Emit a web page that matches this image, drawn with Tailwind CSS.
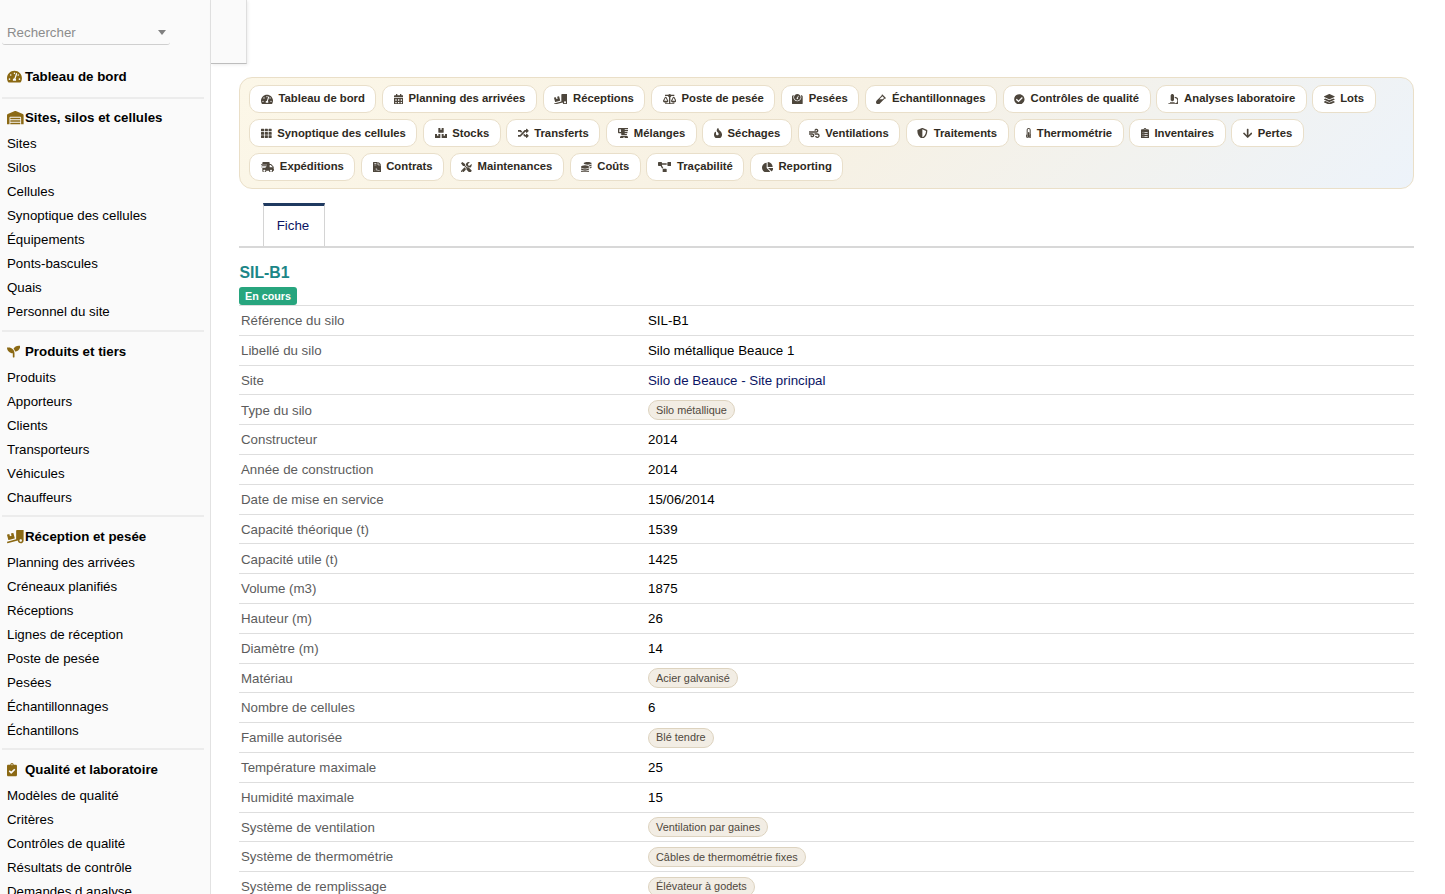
<!DOCTYPE html>
<html lang="fr">
<head>
<meta charset="utf-8">
<title>SIL-B1</title>
<script src="https://cdn.jsdelivr.net/npm/@tailwindcss/browser@4"></script>
</head>
<body class="h-[894px] w-[1445px] overflow-hidden bg-white font-['Liberation_Sans',Arial,sans-serif] text-[13.3px] text-black">
<div class="flex h-[894px] overflow-hidden">
  <aside class="h-[894px] w-[211px] shrink-0 overflow-hidden border-r border-[#e2e2e2] bg-[#fafafa] pl-[2px] pr-[6px]">
    <div class="mt-[20px] flex h-[25px] w-[168px] items-center justify-between rounded-b-[3px] border-b border-[#cfcfcf] pr-[4px] pl-[5px] text-[#8c8c8c]">
      <span class="pt-[2px]">Rechercher</span>
      <span class="mt-px h-0 w-0 border-x-[4px] border-t-[5px] border-x-transparent border-t-[#808080]"></span>
    </div>
    <div class="mt-[18px] flex h-[28px] items-center pl-[5px] font-bold"><span class="flex w-[18px]" data-icon="gauge"></span>Tableau de bord</div>
    <nav id="menu" class="mt-[6px]"></nav>
  </aside>
  <main class="min-w-0 flex-1">
    <div class="h-[64px] w-[36px] border-r border-b border-r-[#dedede] border-b-[#bdbdbd] bg-[#fafafa] shadow-[1px_1px_3px_rgba(0,0,0,0.08)]"></div>
    <div class="ml-[28px] w-[1175px]">
      <div id="pills" class="mt-[13px] flex h-[112px] flex-col gap-[6px] rounded-[13px] border border-[#eadfc8] bg-[linear-gradient(135deg,#fcf7e8_0%,#f7f1e3_50%,#edf3fa_100%)] pt-[7px] pl-[9.4px]"></div>
      <div class="mt-[14px] flex h-[45px] border-b-2 border-[#d8d8d8] pl-[24px]">
        <div class="flex h-[43px] w-[62px] items-center justify-center border-x border-t-[3px] border-x-[#d4d4d4] border-t-[#1f3a60] pr-[2px] text-[#0a1464]">Fiche</div>
      </div>
      <h1 class="mt-[15px] h-[20px] pl-[0.5px] text-[15.8px] leading-[20px] font-bold text-[#1b8687]">SIL-B1</h1>
      <div class="mt-[4px] flex h-[18px]"><span class="rounded-[3px] bg-[#27a57e] px-[6px] text-[10.75px] leading-[18px] font-bold text-white">En cours</span></div>
      <div id="rows"></div>
    </div>
  </main>
</div>
<script>
const sq = (x, y) => `M${x} ${y}c0-6.6 5.4-12 12-12h40c6.6 0 12 5.4 12 12v40c0 6.6-5.4 12-12 12h-40c-6.6 0-12-5.4-12-12z`;
const cell = (x, y) => `M${x} ${y + 24}a24 24 0 0 1 24-24h101a24 24 0 0 1 24 24v80a24 24 0 0 1-24 24h-101a24 24 0 0 1-24-24z`;
const dot = y => `M96 ${y}c-13.3 0-24-10.7-24-24s10.7-24 24-24 24 10.7 24 24-10.7 24-24 24z`;
const bar = y => `M320 ${y}c0 4.4-3.6 8-8 8H168c-4.4 0-8-3.6-8-8v-16c0-4.4 3.6-8 8-8h144c4.4 0 8 3.6 8 8z`;
const clip = 'M336 64h-80c0-35.3-28.7-64-64-64s-64 28.7-64 64H48C21.5 64 0 85.5 0 112v352c0 26.5 21.5 48 48 48h288c26.5 0 48-21.5 48-48V112c0-26.5-21.5-48-48-48zM192 40c13.3 0 24 10.7 24 24s-10.7 24-24 24-24-10.7-24-24 10.7-24 24-24z';
const icons = {
gauge:[576,'M288 32C128.94 32 0 160.94 0 320c0 52.8 14.25 102.26 39.06 144.8 5.61 9.62 16.3 15.2 27.44 15.2h443c11.14 0 21.83-5.58 27.44-15.2C561.75 422.26 576 372.8 576 320c0-159.06-128.94-288-288-288zm0 64c14.71 0 26.58 10.13 30.32 23.65-1.11 2.26-2.64 4.23-3.45 6.67l-9.22 27.67c-5.13 3.49-10.97 6.01-17.64 6.01-17.67 0-32-14.33-32-32S270.33 96 288 96zM96 384c-17.67 0-32-14.33-32-32s14.33-32 32-32 32 14.33 32 32-14.33 32-32 32zm48-160c-17.67 0-32-14.33-32-32s14.33-32 32-32 32 14.33 32 32-14.33 32-32 32zm246.77-72.41l-61.33 184C343.13 347.33 352 364.54 352 384c0 11.72-3.38 22.55-8.88 32H232.88c-5.5-9.45-8.88-20.28-8.88-32 0-33.94 26.5-61.43 59.9-63.59l61.34-184.01c4.17-12.56 17.73-19.45 30.36-15.17 12.57 4.19 19.35 17.79 15.17 30.36zm14.66 57.2l15.52-46.55c3.47-1.29 7.13-2.23 11.05-2.23 17.67 0 32 14.33 32 32s-14.33 32-32 32c-11.38-.01-20.89-6.28-26.57-15.22zM480 384c-17.67 0-32-14.33-32-32s14.33-32 32-32 32 14.33 32 32-14.33 32-32 32z'],
warehouse:[640,'M504 352H136.4c-4.4 0-8 3.6-8 8l-.1 48c0 4.4 3.6 8 8 8H504c4.4 0 8-3.6 8-8v-48c0-4.4-3.6-8-8-8zm0 96H136.1c-4.4 0-8 3.6-8 8l-.1 48c0 4.4 3.6 8 8 8h368c4.4 0 8-3.6 8-8v-48c0-4.4-3.6-8-8-8zm0-192H136.6c-4.4 0-8 3.6-8 8l-.1 48c0 4.4 3.6 8 8 8H504c4.4 0 8-3.6 8-8v-48c0-4.4-3.6-8-8-8zm106.5-139L338.4 3.7a48.15 48.15 0 0 0-36.9 0L29.5 117C11.7 124.5 0 141.9 0 161.3V504c0 4.4 3.6 8 8 8h80c4.4 0 8-3.6 8-8V256c0-17.6 14.6-32 32.6-32h382.8c18 0 32.6 14.4 32.6 32v248c0 4.4 3.6 8 8 8h80c4.4 0 8-3.6 8-8V161.3c0-19.4-11.7-36.8-29.5-44.3z'],
seedling:[512,'M64 96H0c0 123.7 100.3 224 224 224v144c0 8.8 7.2 16 16 16h32c8.8 0 16-7.2 16-16V320C288 196.3 187.7 96 64 96zm384-64c-84.2 0-157.4 46.5-195.7 115.2 27.7 30.2 48.2 66.9 59 107.6C424 243.1 512 147.9 512 32h-64z'],
loading:[640,'M50.2 375.6c2.3 8.5 11.1 13.6 19.6 11.3l216.4-58c8.5-2.3 13.6-11.1 11.3-19.6l-49.7-185.5c-2.3-8.5-11.1-13.6-19.6-11.3L151 133.3l24.8 92.7-61.8 16.5-24.8-92.7-77.3 20.7C3.4 172.8-1.7 181.6.6 190.1l49.6 185.5zM384 0c-17.7 0-32 14.3-32 32v323.6L5.9 450c-4.3 1.2-6.8 5.6-5.6 9.8l12.6 46.3c1.2 4.3 5.6 6.8 9.8 5.6l393.7-107.4C418.8 464.1 467.6 512 528 512c61.9 0 112-50.1 112-112V0H384zm144 448c-26.5 0-48-21.5-48-48s21.5-48 48-48 48 21.5 48 48-21.5 48-48 48z'],
clipcheck:[384,clip+'M313.2 271.8l-143 141.8c-4.7 4.7-12.3 4.6-17-.1l-82.6-83.3c-4.7-4.7-4.6-12.3.1-17L99.1 285c4.7-4.7 12.3-4.6 17 .1l46 46.4 106-105.2c4.7-4.7 12.3-4.6 17 .1l28.2 28.4c4.7 4.8 4.6 12.3-.1 17z'],
calendar:[448,'M0 464c0 26.5 21.5 48 48 48h352c26.5 0 48-21.5 48-48V192H0zM400 64h-48V16c0-8.8-7.2-16-16-16h-32c-8.8 0-16 7.2-16 16v48H160V16c0-8.8-7.2-16-16-16h-32c-8.8 0-16 7.2-16 16v48H48C21.5 64 0 85.5 0 112v48h448v-48c0-26.5-21.5-48-48-48z'+[64,192,320].map(x=>sq(x,268)+sq(x,396)).join('')],
scale:[640,'M256 336h-.02c0-16.18 1.34-8.73-85.05-181.51-17.65-35.29-68.19-35.36-85.87 0C-2.06 328.75.02 320.33.02 336H0c0 44.18 57.31 80 128 80s128-35.82 128-80zM128 176l72 144H56l72-144zm511.98 160c0-16.18 1.34-8.73-85.05-181.51-17.65-35.29-68.19-35.36-85.87 0-87.12 174.26-85.04 165.84-85.04 181.51H384c0 44.18 57.31 80 128 80s128-35.82 128-80h-.02zM440 320l72-144 72 144H440zm88 128H352V153.25c23.51-10.29 41.16-31.48 46.39-57.25H528c8.84 0 16-7.16 16-16V48c0-8.84-7.16-16-16-16H383.64C369.04 12.68 346.09 0 320 0s-49.04 12.68-63.64 32H112c-8.84 0-16 7.16-16 16v32c0 8.84 7.16 16 16 16h129.61c5.23 25.76 22.87 46.96 46.39 57.25V448H112c-8.84 0-16 7.16-16 16v32c0 8.84 7.16 16 16 16h416c8.84 0 16-7.16 16-16v-32c0-8.84-7.16-16-16-16z'],
weight:[512,'M448 64h-25.98C438.44 92.28 448 125.01 448 160c0 105.87-86.13 192-192 192S64 265.87 64 160c0-34.99 9.56-67.72 25.98-96H64C28.71 64 0 92.71 0 128v320c0 35.29 28.71 64 64 64h384c35.29 0 64-28.71 64-64V128c0-35.29-28.71-64-64-64zM256 320c88.37 0 160-71.63 160-160S344.37 0 256 0 96 71.63 96 160s71.63 160 160 160zm-.3-151.94l33.58-78.36c3.5-8.17 12.94-11.92 21.03-8.41 8.12 3.48 11.88 12.89 8.41 21l-33.67 78.55C291.73 188 296 197.45 296 208c0 22.09-17.91 40-40 40s-40-17.91-40-40c0-21.98 17.76-39.77 39.7-39.94z'],
vial:[480,'M477.7 186.1L309.5 18.3c-3.1-3.1-8.2-3.1-11.3 0l-34 33.9c-3.1 3.1-3.1 8.2 0 11.3l11.2 11.1L33 316.5c-38.8 38.7-45.1 102-9.4 143.5 20.6 24 49.5 36 78.4 35.9 26.4 0 52.8-10 72.9-30.1l246.3-245.7 11.2 11.1c3.1 3.1 8.2 3.1 11.3 0l34-33.9c3.1-3 3.1-8.1 0-11.2zM318 256H161l148-147.7 78.5 78.3L318 256z'],
check:[512,'M504 256c0 136.967-111.033 248-248 248S8 392.967 8 256 119.033 8 256 8s248 111.033 248 248zM227.314 387.314l184-184c6.248-6.248 6.248-16.379 0-22.627l-22.627-22.627c-6.248-6.249-16.379-6.249-22.628 0L216 308.118l-70.059-70.059c-6.248-6.248-16.379-6.248-22.628 0l-22.627 22.627c-6.248 6.248-6.248 16.379 0 22.627l104 104c6.249 6.249 16.379 6.249 22.628.001z'],
microscope:[512,'M160 320h12v16c0 8.84 7.16 16 16 16h40c8.84 0 16-7.16 16-16v-16h12c17.67 0 32-14.33 32-32V64c0-17.67-14.33-32-32-32V16c0-8.84-7.16-16-16-16h-64c-8.84 0-16 7.16-16 16v16c-17.67 0-32 14.33-32 32v224c0 17.67 14.33 32 32 32zm304 128h-1.29C493.24 413.99 512 369.2 512 320c0-105.88-86.12-192-192-192v64c70.58 0 128 57.42 128 128s-57.42 128-128 128H48c-26.51 0-48 21.49-48 48 0 8.84 7.16 16 16 16h480c8.84 0 16-7.16 16-16 0-26.51-21.49-48-48-48zm-360-32h208c4.42 0 8-3.58 8-8v-16c0-4.42-3.58-8-8-8H104c-4.42 0-8 3.58-8 8v16c0 4.42 3.58 8 8 8z'],
layers:[512,'M12.41 148.02l232.94 105.67c6.8 3.09 14.49 3.09 21.29 0l232.94-105.67c16.55-7.51 16.55-32.52 0-40.03L266.65 2.31a25.607 25.607 0 0 0-21.29 0L12.41 107.98c-16.55 7.51-16.55 32.53 0 40.04zm487.18 88.28l-58.09-26.33-161.64 73.27c-7.56 3.43-15.59 5.17-23.86 5.17s-16.29-1.74-23.86-5.17L70.51 209.97l-58.1 26.33c-16.55 7.5-16.55 32.5 0 40l232.94 105.59c6.8 3.08 14.49 3.08 21.29 0L499.59 276.3c16.55-7.5 16.55-32.5 0-40zm0 127.8l-57.87-26.23-161.86 73.37c-7.56 3.43-15.59 5.17-23.86 5.17s-16.29-1.74-23.86-5.17L70.29 337.87 12.41 364.1c-16.55 7.5-16.55 32.5 0 40l232.94 105.59c6.8 3.08 14.49 3.08 21.29 0L499.59 404.1c16.55-7.5 16.55-32.5 0-40z'],
grid:[512,[0,181.5,363].map(x=>cell(x,32)+cell(x,192)+cell(x,352)).join('')],
boxes:[576,'M560 288h-80v96l-32-21.3-32 21.3v-96h-80c-8.8 0-16 7.2-16 16v192c0 8.8 7.2 16 16 16h224c8.8 0 16-7.2 16-16V304c0-8.8-7.2-16-16-16zm-384-64h224c8.8 0 16-7.2 16-16V16c0-8.8-7.2-16-16-16h-80v96l-32-21.3L256 96V0h-80c-8.8 0-16 7.2-16 16v192c0 8.8 7.2 16 16 16zm64 64h-80v96l-32-21.3L96 384v-96H16c-8.8 0-16 7.2-16 16v192c0 8.8 7.2 16 16 16h224c8.8 0 16-7.2 16-16V304c0-8.8-7.2-16-16-16z'],
random:[512,'M504.971 359.029c9.373 9.373 9.373 24.569 0 33.941l-80 79.984c-15.01 15.01-40.971 4.49-40.971-16.971V416h-58.785a12.004 12.004 0 0 1-8.773-3.812l-70.556-75.596 53.333-57.143L352 336h32v-39.981c0-21.438 25.943-31.998 40.971-16.971l80 79.981zM12 176h84l52.781 56.551 53.333-57.143-70.556-75.596A11.999 11.999 0 0 0 122.785 96H12c-6.627 0-12 5.373-12 12v56c0 6.627 5.373 12 12 12zm372 0v39.984c0 21.46 25.961 31.98 40.971 16.971l80-79.984c9.373-9.373 9.373-24.569 0-33.941l-80-79.981C409.943 24.021 384 34.582 384 56.019V96h-58.785a12.004 12.004 0 0 0-8.773 3.812L96 336H12c-6.627 0-12 5.373-12 12v56c0 6.627 5.373 12 12 12h110.785c3.326 0 6.503-1.381 8.773-3.812L352 176h32z'],
blender:[512,'M416 384H160c-35.35 0-64 28.65-64 64v32c0 17.67 14.33 32 32 32h320c17.67 0 32-14.33 32-32v-32c0-35.35-28.65-64-64-64zm-128 96c-17.67 0-32-14.33-32-32s14.33-32 32-32 32 14.33 32 32-14.33 32-32 32zm40-416h166.54L512 0H48C21.49 0 0 21.49 0 48v160c0 26.51 21.49 48 48 48h103.27l8.73 96h256l17.46-64H328c-4.42 0-8-3.58-8-8v-16c0-4.42 3.58-8 8-8h114.18l17.46-64H328c-4.42 0-8-3.58-8-8v-16c0-4.42 3.58-8 8-8h140.36l17.46-64H328c-4.42 0-8-3.58-8-8V72c0-4.42 3.58-8 8-8zM64 192V64h69.82l11.64 128H64z'],
fire:[384,'M216 23.86c0-23.8-30.65-32.77-44.15-13.04C48 191.85 224 200 224 288c0 35.63-29.11 64.46-64.85 63.99-35.17-.45-63.15-29.77-63.15-64.94v-85.51c0-21.7-26.47-32.23-41.43-16.5C27.8 213.16 0 261.33 0 320c0 105.87 86.13 192 192 192s192-86.13 192-192c0-170.29-168-193-168-296.14z'],
wind:[512,'M156.7 256H16c-8.8 0-16 7.2-16 16v32c0 8.8 7.2 16 16 16h142.2c15.9 0 30.8 10.9 33.4 26.6 3.3 20-12.1 37.4-31.6 37.4-14.1 0-26.1-9.2-30.4-21.9-2.1-6.3-8.6-10.1-15.2-10.1H81.6c-9.8 0-17.7 8.8-15.9 18.4 8.6 44.1 47.6 77.6 94.2 77.6 57.1 0 102.7-50.1 95.2-108.6C249 291 205.4 256 156.7 256zM16 224h336c59.7 0 106.8-54.8 93.8-116.7-7.6-36.2-36.9-65.5-73.1-73.1-55.4-11.6-105.1 24.9-114.9 75.5-1.9 9.6 6.1 18.3 15.8 18.3h32.8c6.7 0 13.1-3.8 15.2-10.1C325.9 105.2 337.9 96 352 96c19.4 0 34.9 17.4 31.6 37.4-2.6 15.7-17.4 26.6-33.4 26.6H16c-8.8 0-16 7.2-16 16v32c0 8.8 7.2 16 16 16zm384 32H243.7c19.3 16.6 33.2 38.8 39.8 64H400c26.5 0 48 21.5 48 48s-21.5 48-48 48c-17.9 0-33.3-9.9-41.6-24.4-2.9-5-8.7-7.6-14.5-7.6h-33.8c-10.9 0-19 10.8-15.3 21.1 17.8 50.6 70.5 84.8 129.4 72.3 41.2-8.7 75.1-41.6 84.7-82.7C526 321.5 470.5 256 400 256z'],
shield:[512,'M466.5 83.7l-192-80a48.15 48.15 0 0 0-36.9 0l-192 80C27.7 91.1 16 108.6 16 128c0 198.5 114.5 335.7 221.5 380.3 11.8 4.9 25.1 4.9 36.9 0C360.1 472.6 496 349.3 496 128c0-19.4-11.7-36.9-29.5-44.3zM256.1 446.3l-.1-381 175.9 73.3c-3.3 151.4-82.1 261.1-175.8 307.7z'],
thermo:[256,'M192 384c0 35.346-28.654 64-64 64s-64-28.654-64-64c0-23.685 12.876-44.349 32-55.417V224c0-17.673 14.327-32 32-32s32 14.327 32 32v104.583c19.124 11.068 32 31.732 32 55.417zm32-84.653c19.912 22.563 32 52.194 32 84.653 0 70.696-57.303 128-128 128-.299 0-.609-.001-.909-.003C56.789 511.509-.357 453.636.002 383.333.166 351.135 12.254 321.683 32 299.347V96c0-53.019 42.981-96 96-96s96 42.981 96 96v203.347zM208 384c0-34.339-19.37-52.19-32-66.502V96c0-26.467-21.533-48-48-48S80 69.533 80 96v221.498c-12.732 14.428-31.825 32.1-31.999 66.08-.224 43.876 35.563 80.116 79.423 80.42L128 464c44.112 0 80-35.888 80-80z'],
cliplist:[384,clip+[232,328,424].map(y=>dot(y)+bar(y-16)).join('')],
down:[448,'M413.1 222.5l22.2 22.2c9.4 9.4 9.4 24.6 0 33.9L241 473c-9.4 9.4-24.6 9.4-33.9 0L12.7 278.6c-9.4-9.4-9.4-24.6 0-33.9l22.2-22.2c9.5-9.5 25-9.3 34.3.4L184 343.4V56c0-13.3 10.7-24 24-24h32c13.3 0 24 10.7 24 24v287.4l114.8-120.5c9.3-9.8 24.8-10 34.3-.4z'],
shipping:[640,'M624 352h-16V243.9c0-12.7-5.1-24.9-14.1-33.9L494 110.1c-9-9-21.2-14.1-33.9-14.1H416V48c0-26.5-21.5-48-48-48H112C85.5 0 64 21.5 64 48v48H8c-4.4 0-8 3.6-8 8v16c0 4.4 3.6 8 8 8h272c4.4 0 8 3.6 8 8v16c0 4.4-3.6 8-8 8H40c-4.4 0-8 3.6-8 8v16c0 4.4 3.6 8 8 8h208c4.4 0 8 3.6 8 8v16c0 4.4-3.6 8-8 8H8c-4.4 0-8 3.6-8 8v16c0 4.4 3.6 8 8 8h208c4.4 0 8 3.6 8 8v16c0 4.4-3.6 8-8 8H64v128c0 53 43 96 96 96s96-43 96-96h128c0 53 43 96 96 96s96-43 96-96h48c8.8 0 16-7.2 16-16v-32c0-8.8-7.2-16-16-16zM160 464c-26.5 0-48-21.5-48-48s21.5-48 48-48 48 21.5 48 48-21.5 48-48 48zm320 0c-26.5 0-48-21.5-48-48s21.5-48 48-48 48 21.5 48 48-21.5 48-48 48zm80-208H416V144h44.1l99.9 99.9V256z'],
contract:[384,'M224 136V0H24C10.7 0 0 10.7 0 24v464c0 13.3 10.7 24 24 24h336c13.3 0 24-10.7 24-24V160H248c-13.2 0-24-10.8-24-24zM377 105L279.1 7c-4.5-4.5-10.6-7-17-7H256v128h128v-6.1c0-6.3-2.5-12.4-7-16.9zM64 64h96v32H64zM64 128h96v32H64zM64 416h24c6 0 12-4 14-10l34-102c4-12 20-12 24 0l24 73c16-10 38-7 48 11 3 5 8 8 14 8h74v24h-74c-15 0-28-8-35-21-3-6-11-6-14 0-7 13-25 12-30-3l-27-82-20 60c-7 19-20 32-39 32H64z'],
tools:[512,'M501.1 395.7L384 278.6c-23.1-23.1-57.6-27.6-85.4-13.9L192 158.1V96L64 0 0 64l96 128h62.1l106.6 106.6c-13.6 27.8-9.2 62.3 13.9 85.4l117.1 117.1c14.6 14.6 38.2 14.6 52.7 0l52.7-52.7c14.5-14.6 14.5-38.2 0-52.7zM331.7 225c28.3 0 54.9 11 74.9 31l19.4 19.4c15.8-6.9 30.8-16.5 43.8-29.5 37.1-37.1 49.7-89.3 37.9-136.7-2.2-9-13.5-12.1-20.1-5.5l-74.4 74.4-67.9-11.3L334 98.9l74.4-74.4c6.6-6.6 3.4-17.9-5.7-20.2-47.4-11.7-99.6.9-136.6 37.9-28.5 28.5-41.9 66.1-41.2 103.6l82.1 82.1c8.1-1.9 16.5-2.9 24.7-2.9zm-103.9 82l-56.7-56.7L18.7 402.8c-25 25-25 65.5 0 90.5s65.5 25 90.5 0l123.6-123.6c-7.6-19.9-9.9-41.6-5-62.7zM64 472c-13.2 0-24-10.8-24-24 0-13.3 10.7-24 24-24s24 10.7 24 24c0 13.2-10.7 24-24 24z'],
coins:[512,'M0 405.3V448c0 35.3 86 64 192 64s192-28.7 192-64v-42.7C342.7 434.4 267.2 448 192 448S41.3 434.4 0 405.3zM320 128c106 0 192-28.7 192-64S426 0 320 0 128 28.7 128 64s86 64 192 64zM0 300.4V352c0 35.3 86 64 192 64s192-28.7 192-64v-51.6c-41.3 34-116.9 51.6-192 51.6S41.3 334.4 0 300.4zm416 11c57.3-11.1 96-31.7 96-55.4v-42.7c-23.2 16.4-57.3 27.6-96 34.5v63.6zM192 160C86 160 0 195.8 0 240s86 80 192 80 192-35.8 192-80-86-80-192-80zm219.3 56.3c60-10.8 100.7-32 100.7-56.3v-42.7c-35.5 25.1-96.5 38.6-160.7 41.8 29.5 14.3 51.2 33.5 60 57.2z'],
diagram:[640,'M384 320H256c-17.67 0-32 14.33-32 32v128c0 17.67 14.33 32 32 32h128c17.67 0 32-14.33 32-32V352c0-17.67-14.33-32-32-32zM192 32c0-17.67-14.33-32-32-32H32C14.33 0 0 14.33 0 32v128c0 17.67 14.33 32 32 32h95.72l73.16 128.04C211.98 300.98 232.4 288 256 288h.28L192 175.51V128h224V64H192V32zM608 0H480c-17.67 0-32 14.33-32 32v128c0 17.67 14.33 32 32 32h128c17.67 0 32-14.33 32-32V32c0-17.67-14.33-32-32-32z'],
pie:[544,'M527.79 288H290.5l158.03 158.03c6.04 6.04 15.98 6.53 22.19.68 38.7-36.46 65.32-85.61 73.13-140.86 1.34-9.46-6.51-17.85-16.06-17.85zm-15.83-64.8C503.72 103.74 408.26 8.28 288.8.04 279.68-.59 272 7.1 272 16.24V240h223.77c9.14 0 16.82-7.68 16.19-16.8zM224 288V50.71c0-9.55-8.39-17.4-17.84-16.06C86.99 51.49-4.1 155.6.14 280.37 4.5 408.51 114.83 513.59 243.03 511.98c50.4-.63 96.97-16.87 135.26-44.03 7.9-5.6 8.42-17.23 1.57-24.08L224 288z']
};
const svg = (name, cls) => `<svg class="${cls}" viewBox="0 0 ${icons[name][0]} 512" fill="currentColor" fill-rule="evenodd"><path d="${icons[name][1]}"/></svg>`;
document.querySelectorAll('[data-icon]').forEach(e => e.innerHTML = svg(e.dataset.icon, 'h-[13.3px] w-auto shrink-0 text-[#8b6914]'));

document.getElementById('menu').innerHTML = [
 ['warehouse','Sites, silos et cellules',['Sites','Silos','Cellules','Synoptique des cellules','Équipements','Ponts-bascules','Quais','Personnel du site']],
 ['seedling','Produits et tiers',['Produits','Apporteurs','Clients','Transporteurs','Véhicules','Chauffeurs']],
 ['loading','Réception et pesée',['Planning des arrivées','Créneaux planifiés','Réceptions','Lignes de réception','Poste de pesée','Pesées','Échantillonnages','Échantillons']],
 ['clipcheck','Qualité et laboratoire',['Modèles de qualité','Critères','Contrôles de qualité','Résultats de contrôle','Demandes d analyse']]
].map(([i,t,l]) => `<section class="border-t-2 border-[#ececec] pt-[6px] pb-[5px] first:pt-[5px] first:pb-[6px]"><h2 class="flex h-[28px] items-center pl-[5px] font-bold"><span class="flex w-[18px]">${svg(i,'h-[13.3px] w-auto shrink-0 text-[#8b6914]')}</span>${t}</h2>${l.map(x=>`<a class="block h-[24px] pl-[5px] leading-[24px]">${x}</a>`).join('')}</section>`).join('');

document.getElementById('pills').innerHTML = [
 [['gauge','Tableau de bord'],['calendar','Planning des arrivées'],['loading','Réceptions'],['scale','Poste de pesée'],['weight','Pesées'],['vial','Échantillonnages'],['check','Contrôles de qualité'],['microscope','Analyses laboratoire'],['layers','Lots']],
 [['grid','Synoptique des cellules'],['boxes','Stocks'],['random','Transferts'],['blender','Mélanges'],['fire','Séchages'],['wind','Ventilations'],['shield','Traitements'],['thermo','Thermométrie'],['cliplist','Inventaires'],['down','Pertes']],
 [['shipping','Expéditions'],['contract','Contrats'],['tools','Maintenances'],['coins','Coûts'],['diagram','Traçabilité'],['pie','Reporting']]
].map((r,n) => `<div class="flex h-[28px] gap-[5.7px]">${r.map(([i,t]) => `<a class="flex h-[28px] items-center gap-[5.6px] rounded-[10px] border border-[#e9dfca] bg-white px-[10.5px] text-[11.3px] font-bold whitespace-nowrap text-[#2f2a22]">${svg(i,'h-[10.7px] w-auto shrink-0 text-[#4d463c]')}<span class="${n===1?'':'pb-[2px]'}">${t}</span></a>`).join('')}</div>`).join('');

document.getElementById('rows').innerHTML = [
 ['Référence du silo','SIL-B1'],['Libellé du silo','Silo métallique Beauce 1'],['Site','Silo de Beauce - Site principal','link'],['Type du silo','Silo métallique','chip'],['Constructeur','2014'],['Année de construction','2014'],['Date de mise en service','15/06/2014'],['Capacité théorique (t)','1539'],['Capacité utile (t)','1425'],['Volume (m3)','1875'],['Hauteur (m)','26'],['Diamètre (m)','14'],['Matériau','Acier galvanisé','chip'],['Nombre de cellules','6'],['Famille autorisée','Blé tendre','chip'],['Température maximale','25'],['Humidité maximale','15'],['Système de ventilation','Ventilation par gaines','chip'],['Système de thermométrie','Câbles de thermométrie fixes','chip'],['Système de remplissage','Élévateur à godets','chip']
].map(([k,v,t]) => `<div class="flex h-[29.8px] items-center border-t border-[#dedede] pl-[2px]"><span class="w-[407px] pt-[1.4px] text-[#5c5c5c]">${k}</span>${t==='chip'?`<span class="flex h-[20px] items-center rounded-full border border-[#ddd3bf] bg-[#f2ede4] px-[7px] text-[10.9px] text-[#4f483d]">${v}</span>`:t==='link'?`<a class="pt-[1.4px] text-[#0a1464]">${v}</a>`:`<span class="pt-[1.4px]">${v}</span>`}</div>`).join('');
</script>
</body>
</html>
